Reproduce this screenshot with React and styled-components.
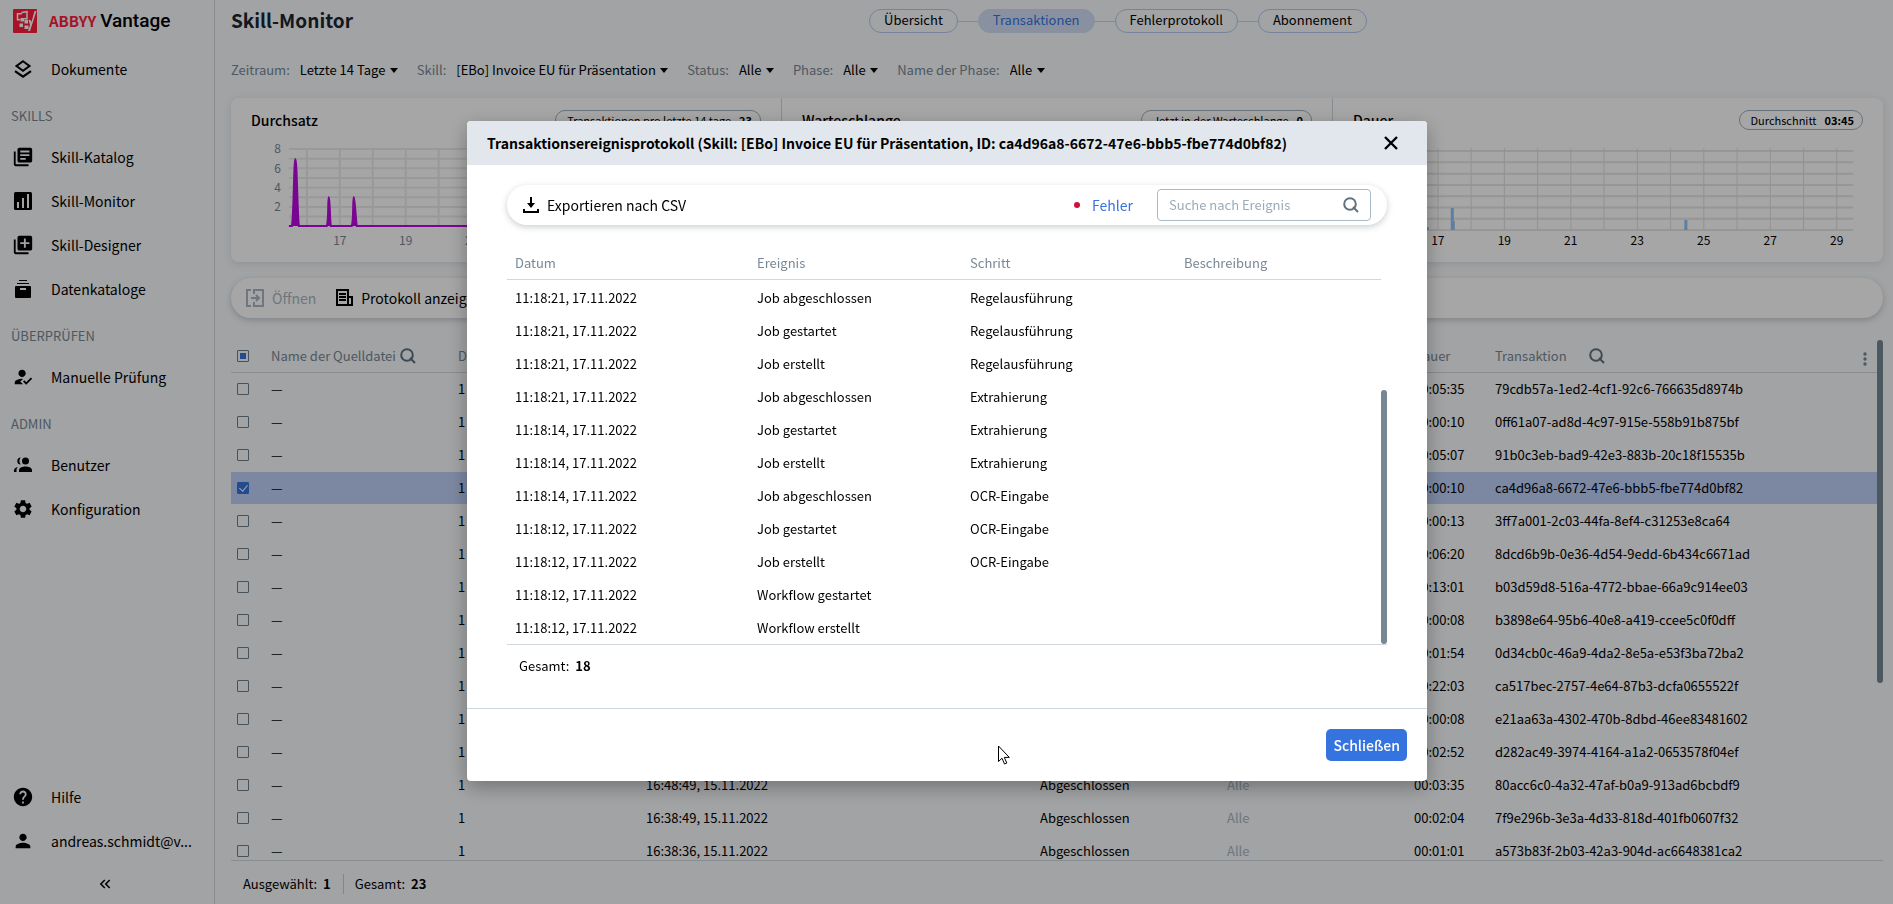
import React from "react";
import styled, { createGlobalStyle, css } from "styled-components";
import {
  MdLibraryBooks,
  MdAddToPhotos,
  MdHowToReg,
  MdSettings,
  MdHelp,
  MdPerson,
  MdKeyboardDoubleArrowLeft,
} from "react-icons/md";

const c = {
  page: "#f8fafc",
  line: "#d0d8de",
  muted: "#788896",
  disabled: "#a9b7c3",
  blue: "#3573de",
  selected: "#bfd1f8",
  thumb: "#758894",
  ink: "#000000",
};

const GlobalStyle = createGlobalStyle`
  * { box-sizing: border-box; }
  body {
    margin: 0;
    background: ${c.page};
    color: ${c.ink};
    font-family: "Noto Sans CJK SC", "Open Sans", sans-serif;
    font-size: 13px;
    line-height: 20px;
  }
  button, input, select { font: inherit; color: inherit; }
  a { color: inherit; text-decoration: none; }
  svg { display: block; flex: none; }
`;

const Shell = styled.div`
  display: flex;
  height: 100vh;
  overflow: hidden;
`;

/* ---------- sidebar ---------- */

const Sidebar = styled.aside`
  flex: 0 0 215px;
  min-width: 0;
  display: flex;
  flex-direction: column;
  border-right: 1px solid ${c.line};
`;

const Brand = styled.a`
  display: flex;
  align-items: center;
  height: 47px;
  padding: 0 0 5px 13px;
`;

const BrandName = styled.span`
  margin-left: 12px;
  color: #ff1e3c;
  font-size: 15px;
  font-weight: 700;
`;

const BrandProduct = styled.span`
  margin-left: 4px;
  font-family: Roboto, sans-serif;
  font-size: 19px;
  font-weight: 500;
`;

const Nav = styled.nav`
  display: flex;
  flex-direction: column;
  ${(p) => p.$bottom && "margin-top: auto;"}
`;

const NavItem = styled.a`
  display: flex;
  align-items: center;
  height: 44px;
  padding: 0 12px 0 11px;
  font-size: 14px;
`;

const NavIcon = styled.span`
  flex: none;
  display: grid;
  place-items: center;
  width: 24px;
  margin-right: 16px;
`;

const NavLabel = styled.span`
  white-space: nowrap;
`;

const NavHeading = styled.h2`
  margin: 0;
  padding: 0 11px;
  font-size: 13px;
  font-weight: 400;
  line-height: 50px;
  height: 44px;
  color: ${c.muted};
`;

const Collapse = styled.button`
  display: grid;
  place-items: center;
  height: 41px;
  padding: 0 4px 0 0;
  border: 0;
  background: none;
`;

/* ---------- page header ---------- */

const Main = styled.main`
  flex: 1;
  min-width: 0;
  display: flex;
  flex-direction: column;
  padding: 0 10px 0 16px;
`;

const Header = styled.header`
  display: flex;
  align-items: center;
  height: 42px;
`;

const Title = styled.h1`
  margin: 0;
  padding-bottom: 2px;
  font-size: 19px;
  font-weight: 700;
  color: #1c2530;
`;

const Tabs = styled.nav`
  display: flex;
  align-items: center;
  margin: 0 auto;
`;

const TabLink = styled.span`
  width: 20px;
  height: 1px;
  background: #c5d4f0;
`;

const Tab = styled.a`
  height: 24px;
  padding: 0 14px;
  border: 1px solid ${(p) => (p.$active ? "#d3dff8" : "#b5c9ee")};
  border-radius: 12px;
  background: ${(p) => (p.$active ? "#d3dff8" : "transparent")};
  color: ${(p) => (p.$active ? c.blue : c.ink)};
  line-height: 20px;
`;

const Filters = styled.div`
  display: flex;
  align-items: center;
  gap: 19px;
  height: 56px;
`;

const Filter = styled.label`
  display: flex;
  align-items: center;
  white-space: nowrap;
  color: ${c.muted};
`;

const Select = styled.select`
  appearance: none;
  margin: 0 4px 0 10px;
  padding: 0;
  border: 0;
  background: none;
  color: ${c.ink};
`;

/* ---------- charts ---------- */

const Cards = styled.section`
  flex: none;
  display: flex;
  height: 164px;
  border-radius: 8px;
  background: #fff;
  box-shadow: 0 2px 8px rgba(60, 90, 110, 0.15);
`;

const Panel = styled.article`
  flex: 1 1 0;
  min-width: 0;
  & + & { border-left: 1px solid ${c.line}; }
`;

const PanelHead = styled.div`
  display: flex;
  align-items: center;
  justify-content: space-between;
  height: 44px;
  padding: 0 20px;
`;

const PanelTitle = styled.h2`
  margin: 0;
  font-size: 14px;
  font-weight: 500;
`;

const Badge = styled.span`
  display: flex;
  gap: 8px;
  height: 20px;
  padding: 0 8px 0 11px;
  border: 1px solid #9fb0bd;
  border-radius: 10px;
  font-size: 11px;
  line-height: 19px;
`;

const Plot = styled.svg`
  width: 100%;
  height: 120px;
  font-size: 12px;
`;

/* ---------- toolbars ---------- */

const Toolbar = styled.div`
  flex: none;
  display: flex;
  align-items: center;
  height: 40px;
  border-radius: 20px;
  background: #fff;
  box-shadow: 0 2px 6px rgba(40, 60, 80, 0.25);
  ${(p) =>
    p.$page
      ? css`margin: 16px 0 22px; padding: 0 15px; gap: 20px;`
      : css`padding: 0 16px;`}
`;

const ToolButton = styled.button`
  display: flex;
  align-items: center;
  gap: 8px;
  padding: 0;
  border: 0;
  background: none;
  font-size: 14px;
  color: ${c.ink};
  white-space: nowrap;
  &:disabled { color: ${c.disabled}; }
`;

/* ---------- tables ---------- */

const Scroller = styled.div`
  flex: 1;
  min-height: 0;
  display: flex;
  overflow: hidden;
  border-bottom: 1px solid ${c.line};
`;

const TableBox = styled.div`
  flex: 1;
  min-width: 0;
  overflow: hidden;
`;

const Track = styled.div`
  flex: none;
  display: flex;
  flex-direction: column;
  justify-content: ${(p) => (p.$atEnd ? "flex-end" : "flex-start")};
  width: 6px;
`;

const Thumb = styled.div`
  height: ${(p) => p.$size}%;
  border-radius: 3px;
  background: ${c.thumb};
`;

const Table = styled.table`
  width: 100%;
  table-layout: fixed;
  border-collapse: separate;
  border-spacing: 0;
`;

const Th = styled.th`
  height: ${(p) => (p.$tall ? 39 : 33)}px;
  padding: ${(p) => (p.$tall ? "6px 8px 0" : "0 8px")};
  border-bottom: 1px solid ${c.line};
  color: ${c.muted};
  font-weight: 400;
  text-align: left;
  white-space: nowrap;
`;

const ThInner = styled.div`
  display: flex;
  align-items: center;
  gap: ${(p) => p.$gap || 0}px;
`;

const MenuButton = styled.button`
  margin-left: auto;
  padding: 6px 2px 0;
  border: 0;
  background: none;
  color: ${c.muted};
`;

const Td = styled.td`
  height: 33px;
  padding: 0 8px;
  border-bottom: 1px solid transparent;
  background-clip: padding-box;
  white-space: nowrap;
  ${(p) => p.$muted && `color: ${c.disabled};`}
`;

const Tr = styled.tr`
  ${(p) => p.$selected && css`${Td} { background-color: ${c.selected}; }`}
`;

const CheckBox = styled.input.attrs({ type: "checkbox" })`
  appearance: none;
  display: block;
  position: relative;
  width: 12px;
  height: 12px;
  margin: 0 0 0 -2px;
  border: 1px solid #6b7e8d;
  border-radius: 1px;

  &:checked { border-color: ${c.blue}; background: ${c.blue}; }
  &:checked::after {
    content: "";
    position: absolute;
    left: 3px;
    top: 0;
    width: 4px;
    height: 7px;
    border: solid #fff;
    border-width: 0 1px 1px 0;
    transform: rotate(40deg);
  }
  &:indeterminate::after {
    content: "";
    position: absolute;
    inset: 2px;
    background: ${c.blue};
  }
`;

const StatusBar = styled.footer`
  flex: none;
  display: flex;
  align-items: center;
  height: 43px;
  padding: 3px 12px 0;
`;

const Count = styled.span`
  display: flex;
  gap: 6px;
  & + & {
    margin-left: 12px;
    padding-left: 11px;
    border-left: 1px solid #c5cfd6;
  }
`;

/* ---------- dialog ---------- */

const Backdrop = styled.div`
  position: fixed;
  inset: 0;
  display: flex;
  align-items: center;
  justify-content: center;
  padding: 0 0 2px 1px;
  background: rgba(0, 0, 0, 0.35);
`;

const Dialog = styled.section`
  display: flex;
  flex-direction: column;
  width: 960px;
  max-width: 100%;
  border-radius: 4px;
  overflow: hidden;
  background: #fff;
  box-shadow: 0 6px 20px rgba(0, 0, 0, 0.3);
`;

const DialogHead = styled.header`
  display: flex;
  align-items: center;
  justify-content: space-between;
  height: 44px;
  padding: 0 28px 0 20px;
  background: #e1e7ec;
`;

const DialogTitle = styled.h2`
  margin: 0;
  font-size: 14px;
  font-weight: 700;
`;

const IconButton = styled.button`
  padding: 0;
  border: 0;
  background: none;
`;

const DialogBody = styled.div`
  display: flex;
  flex-direction: column;
  padding: 20px 40px 0;
`;

const ErrorToggle = styled(ToolButton)`
  margin: 0 24px 0 auto;
  gap: 12px;
  color: ${c.blue};
  &::before {
    content: "";
    width: 6px;
    height: 6px;
    border-radius: 3px;
    background: #d0103a;
  }
`;

const Search = styled.label`
  display: flex;
  align-items: center;
  width: 214px;
  height: 32px;
  padding: 0 11px;
  border: 1px solid #a9bac8;
  border-radius: 4px;
`;

const SearchInput = styled.input`
  flex: 1;
  min-width: 0;
  padding: 0;
  border: 0;
  outline: 0;
  background: none;
  &::placeholder { color: #9aabb9; opacity: 1; }
`;

const EventScroller = styled(Scroller)`
  flex: none;
  margin-top: 16px;
`;

const EventRows = styled.tbody`
  &::before {
    content: "";
    display: block;
    height: 2px;
  }
  tr:last-child td {
    height: 32px;
    border-bottom: 0;
  }
`;

const Total = styled.div`
  padding: 11px 12px 32px;
`;

const DialogFoot = styled.footer`
  display: flex;
  justify-content: flex-end;
  padding: 20px;
  border-top: 1px solid #cdd7de;
`;

const Primary = styled.button`
  height: 32px;
  padding: 0 7px;
  border: 0;
  border-radius: 5px;
  background: ${c.blue};
  color: #fff;
  font-size: 14px;
  font-weight: 500;
`;

const Pointer = styled.svg`
  position: absolute;
  left: 998px;
  top: 745px;
`;

/* ---------- drawings ---------- */

const Logo = () => (
  <svg width="24" height="24" viewBox="0 0 24 24">
    <path fill="#ff1e3c" d="M1 0h22a1 1 0 0 1 1 1v22a1 1 0 0 1-1 1H1a1 1 0 0 1-1-1V1a1 1 0 0 1 1-1z" />
    <path fill="none" stroke="#fff" strokeWidth="1.500" d="M7 10.800H4.500V4.800h4.500M8.500 3.500l5.500-.800v7h-3" />
    <g fill="#fff">
      <path d="M7.500 9h3.500v3.500H7.500zM11.500 11h3.500v3.500h-3.500zM6.500 14.500h3.500V18H6.500zM11.500 16.500h4V20h-4z" />
      <path d="M21.500 2h2L17 22h-2l2-6-1.500-5h2l1 2z" />
    </g>
  </svg>
);

const LayersIcon = () => (
  <svg width="18" height="18" viewBox="0 0 18 18" fill="none" stroke="currentColor" strokeWidth="2">
    <path d="M9 1.300 15.500 6 9 10.700 2.500 6z" />
    <path d="M1 11.200 9 16.600 17 11.200" strokeWidth="2.200" />
  </svg>
);

const MonitorIcon = () => (
  <svg width="18" height="18" viewBox="0 0 18 18">
    <rect width="18" height="18" rx="1.500" fill="currentColor" />
    <path d="M3 10h2v6H3zM8 6h2v10H8zM13 2h2v14h-2z" fill={c.page} />
  </svg>
);

const UsersIcon = () => (
  <svg width="18" height="18" viewBox="0 0 18 18" fill="currentColor">
    <circle cx="11.500" cy="5" r="3.500" />
    <path d="M6.800 1.500a3.500 3.500 0 0 0 0 7 5.500 5.500 0 0 1 0-7z" />
    <path d="M5 16v-1.800C5 11.500 9 10.500 11.500 10.500s6.500 1 6.500 3.700V16zM0 16v-1.500c0-1.600 1.500-2.700 3.800-3.400-.9.900-1.300 1.900-1.300 3V16z" />
  </svg>
);

const ArchiveIcon = () => (
  <svg width="18" height="18" viewBox="0 0 18 18" fill="currentColor">
    <path d="M5 0h8v1H5zM3 3h12v1H3zM2 6h14a1 1 0 0 1 1 1v10a1 1 0 0 1-1 1H2a1 1 0 0 1-1-1V7a1 1 0 0 1 1-1zM6 8v2h6V8z" fillRule="evenodd" />
  </svg>
);

const SearchIcon = () => (
  <svg width="16" height="16" viewBox="0 0 16 16" fill="none" stroke="#5f7280" strokeWidth="2">
    <circle cx="7" cy="7" r="5.800" />
    <path d="M10 10l5 5" />
  </svg>
);

const OpenIcon = () => (
  <svg width="18" height="18" viewBox="0 0 18 18" fill="none" stroke="currentColor" strokeWidth="2">
    <path d="M5 1H1v16h4M8 5V1h9v16H8v-4" />
    <path d="M5 9h8M10 6l3 3-3 3" />
  </svg>
);

const LogIcon = () => (
  <svg width="17" height="18" viewBox="0 0 17 18" fill="none" stroke="currentColor" strokeWidth="2">
    <path d="M1 1h11v15H1zM12 8h4v8h-5M3 5h7M3 8h7M3 11h7" />
  </svg>
);

const DownloadIcon = () => (
  <svg width="16" height="16" viewBox="0 0 16 16">
    <path d="M1 12v3h14v-3" fill="none" stroke="currentColor" strokeWidth="2" />
    <path d="M7 0h2v6h3l-4 5-4-5h3z" fill="currentColor" />
  </svg>
);

const Caret = () => (
  <svg width="8" height="5" viewBox="0 0 8 5">
    <path d="M0 0h8L4 5z" fill="#000" />
  </svg>
);

const DotsIcon = () => (
  <svg width="4" height="14" viewBox="0 0 4 14" fill="currentColor">
    <circle cx="2" cy="2" r="1.700" />
    <circle cx="2" cy="7" r="1.700" />
    <circle cx="2" cy="12" r="1.700" />
  </svg>
);

const CloseIcon = () => (
  <svg width="16" height="16" viewBox="0 0 16 16">
    <path d="M2 2l12 12M14 2L2 14" stroke="#000" strokeWidth="2.400" />
  </svg>
);

const range = (n) => Array.from({ length: n }, (_, i) => i);

const ThroughputPlot = () => (
  <Plot viewBox="0 0 551 120" role="img" aria-label="Durchsatz">
    <g stroke="#ebebeb" strokeWidth="2">
      {range(8).map((i) => <path key={i} d={`M58 ${7 + i * 9.65}H530`} />)}
      {range(14).map((i) => <path key={i} d={`M${76 + i * 33} 6V84`} />)}
    </g>
    <path d="M58 84h3c2-10 2-67 3.500-67s2 57 3.500 67h28c2-6 1-29 2-29s1 23 2 29h21c2-6 1-29 2-29s2 23 3 29H530" fill="#bb08e0" stroke="#bb08e0" strokeWidth="2" />
    <g fill={c.muted} textAnchor="end">
      {[8, 6, 4, 2].map((n, i) => <text key={n} x="50" y={11 + i * 19.5}>{n}</text>)}
    </g>
    <g fill={c.muted} textAnchor="middle">
      {[17, 19, 21].map((n, i) => <text key={n} x={109 + i * 66} y="103">{n}</text>)}
    </g>
  </Plot>
);

const DurationPlot = ({ bars }) => (
  <Plot viewBox="0 0 551 120" role="img">
    <g stroke="#e6e6e6" strokeWidth="2">
      {range(8).map((i) => <path key={i} d={`M38 ${9 + i * 11.3}H521`} />)}
    </g>
    <g stroke="#e0e0e0">
      {range(15).map((i) => <path key={i} d={`M${38.5 + i * 33.3} 6V88`} />)}
    </g>
    {bars && (
      <>
        <path d="M93 85h3v3h-3zM118 66h3v13h1v9h-4zM352 78h3v10h-3z" fill="#91c3fa" />
        <g textAnchor="middle">
          {[17, 19, 21, 23, 25, 27, 29].map((n, i) => (
            <text key={n} x={105 + i * 66.6} y="103">{n}</text>
          ))}
        </g>
      </>
    )}
  </Plot>
);

/* ---------- data ---------- */

const filters = [
  ["Zeitraum:", "Letzte 14 Tage"],
  ["Skill:", "[EBo] Invoice EU für Präsentation"],
  ["Status:", "Alle"],
  ["Phase:", "Alle"],
  ["Name der Phase:", "Alle"],
];

const tabs = ["Übersicht", "Transaktionen", "Fehlerprotokoll", "Abonnement"];

const transactions = [
  ["", "00:05:35", "79cdb57a-1ed2-4cf1-92c6-766635d8974b"],
  ["", "00:00:10", "0ff61a07-ad8d-4c97-915e-558b91b875bf"],
  ["", "00:05:07", "91b0c3eb-bad9-42e3-883b-20c18f15535b"],
  ["", "00:00:10", "ca4d96a8-6672-47e6-bbb5-fbe774d0bf82"],
  ["", "00:00:13", "3ff7a001-2c03-44fa-8ef4-c31253e8ca64"],
  ["", "00:06:20", "8dcd6b9b-0e36-4d54-9edd-6b434c6671ad"],
  ["", "00:13:01", "b03d59d8-516a-4772-bbae-66a9c914ee03"],
  ["", "00:00:08", "b3898e64-95b6-40e8-a419-ccee5c0f0dff"],
  ["", "00:01:54", "0d34cb0c-46a9-4da2-8e5a-e53f3ba72ba2"],
  ["", "00:22:03", "ca517bec-2757-4e64-87b3-dcfa0655522f"],
  ["", "00:00:08", "e21aa63a-4302-470b-8dbd-46ee83481602"],
  ["", "00:02:52", "d282ac49-3974-4164-a1a2-0653578f04ef"],
  ["16:48:49, 15.11.2022", "00:03:35", "80acc6c0-4a32-47af-b0a9-913ad6bcbdf9"],
  ["16:38:49, 15.11.2022", "00:02:04", "7f9e296b-3e3a-4d33-818d-401fb0607f32"],
  ["16:38:36, 15.11.2022", "00:01:01", "a573b83f-2b03-42a3-904d-ac6648381ca2"],
];

const events = [
  ["11:18:21, 17.11.2022", "Job abgeschlossen", "Regelausführung"],
  ["11:18:21, 17.11.2022", "Job gestartet", "Regelausführung"],
  ["11:18:21, 17.11.2022", "Job erstellt", "Regelausführung"],
  ["11:18:21, 17.11.2022", "Job abgeschlossen", "Extrahierung"],
  ["11:18:14, 17.11.2022", "Job gestartet", "Extrahierung"],
  ["11:18:14, 17.11.2022", "Job erstellt", "Extrahierung"],
  ["11:18:14, 17.11.2022", "Job abgeschlossen", "OCR-Eingabe"],
  ["11:18:12, 17.11.2022", "Job gestartet", "OCR-Eingabe"],
  ["11:18:12, 17.11.2022", "Job erstellt", "OCR-Eingabe"],
  ["11:18:12, 17.11.2022", "Workflow gestartet", ""],
  ["11:18:12, 17.11.2022", "Workflow erstellt", ""],
];

const Item = ({ icon, children }) => (
  <NavItem href="#">
    <NavIcon>{icon}</NavIcon>
    <NavLabel>{children}</NavLabel>
  </NavItem>
);

const SideMenu = () => (
  <Sidebar>
    <Brand href="#">
      <Logo />
      <BrandName>ABBYY</BrandName>
      <BrandProduct>Vantage</BrandProduct>
    </Brand>
    <Nav>
      <Item icon={<LayersIcon />}>Dokumente</Item>
      <NavHeading>SKILLS</NavHeading>
      <Item icon={<MdLibraryBooks size={22} />}>Skill-Katalog</Item>
      <Item icon={<MonitorIcon />}>Skill-Monitor</Item>
      <Item icon={<MdAddToPhotos size={22} />}>Skill-Designer</Item>
      <Item icon={<ArchiveIcon />}>Datenkataloge</Item>
      <NavHeading>ÜBERPRÜFEN</NavHeading>
      <Item icon={<MdHowToReg size={22} />}>Manuelle Prüfung</Item>
      <NavHeading>ADMIN</NavHeading>
      <Item icon={<UsersIcon />}>Benutzer</Item>
      <Item icon={<MdSettings size={22} />}>Konfiguration</Item>
    </Nav>
    <Nav $bottom>
      <Item icon={<MdHelp size={22} />}>Hilfe</Item>
      <Item icon={<MdPerson size={22} />}>andreas.schmidt@v...</Item>
      <Collapse aria-label="Menü einklappen">
        <MdKeyboardDoubleArrowLeft size={18} />
      </Collapse>
    </Nav>
  </Sidebar>
);

const Transactions = () => (
  <Scroller>
    <TableBox>
      <Table>
        <colgroup>
          {[32, 187, 188, 394, 187, 187, 81].map((w, i) => <col key={i} width={w} />)}
          <col />
        </colgroup>
        <thead>
          <tr>
            <Th>
              <CheckBox
                aria-label="Alle auswählen"
                ref={(el) => { if (el) el.indeterminate = true; }}
              />
            </Th>
            <Th><ThInner $gap={4}>Name der Quelldatei <SearchIcon /></ThInner></Th>
            <Th>Dokumente</Th>
            <Th />
            <Th />
            <Th />
            <Th>Dauer</Th>
            <Th>
              <ThInner $gap={22}>
                Transaktion <SearchIcon />
                <MenuButton aria-label="Spalten"><DotsIcon /></MenuButton>
              </ThInner>
            </Th>
          </tr>
        </thead>
        <tbody>
          {transactions.map(([date, duration, id], i) => (
            <Tr key={id} $selected={i === 3}>
              <Td><CheckBox aria-label={id} defaultChecked={i === 3} /></Td>
              <Td>—</Td>
              <Td>1</Td>
              <Td>{date}</Td>
              <Td>{date && "Abgeschlossen"}</Td>
              <Td $muted>{date && "Alle"}</Td>
              <Td>{duration}</Td>
              <Td>{id}</Td>
            </Tr>
          ))}
        </tbody>
      </Table>
    </TableBox>
    <Track><Thumb $size={66} /></Track>
  </Scroller>
);

const EventDialog = () => (
  <Backdrop>
    <Dialog role="dialog" aria-labelledby="event-title">
      <DialogHead>
        <DialogTitle id="event-title">
          Transaktionsereignisprotokoll (Skill: [EBo] Invoice EU für Präsentation, ID: ca4d96a8-6672-47e6-bbb5-fbe774d0bf82)
        </DialogTitle>
        <IconButton aria-label="Schließen"><CloseIcon /></IconButton>
      </DialogHead>
      <DialogBody>
        <Toolbar>
          <ToolButton><DownloadIcon />Exportieren nach CSV</ToolButton>
          <ErrorToggle>Fehler</ErrorToggle>
          <Search>
            <SearchInput aria-label="Suche nach Ereignis" placeholder="Suche nach Ereignis" />
            <SearchIcon />
          </Search>
        </Toolbar>
        <EventScroller>
          <TableBox>
            <Table>
              <colgroup>
                {[242, 213, 214].map((w, i) => <col key={i} width={w} />)}
                <col />
              </colgroup>
              <thead>
                <tr>
                  <Th $tall>Datum</Th>
                  <Th $tall>Ereignis</Th>
                  <Th $tall>Schritt</Th>
                  <Th $tall>Beschreibung</Th>
                </tr>
              </thead>
              <EventRows>
                {events.map(([date, name, step], i) => (
                  <Tr key={i}>
                    <Td>{date}</Td>
                    <Td>{name}</Td>
                    <Td>{step}</Td>
                    <Td />
                  </Tr>
                ))}
              </EventRows>
            </Table>
          </TableBox>
          <Track $atEnd><Thumb $size={63} /></Track>
        </EventScroller>
        <Total><Count>Gesamt: <b>18</b></Count></Total>
      </DialogBody>
      <DialogFoot>
        <Primary>Schließen</Primary>
      </DialogFoot>
    </Dialog>
  </Backdrop>
);

export default function App() {
  return (
    <>
      <GlobalStyle />
      <Shell>
        <SideMenu />
        <Main>
          <Header>
            <Title>Skill-Monitor</Title>
            <Tabs>
              {tabs.map((name, i) => (
                <React.Fragment key={name}>
                  {i > 0 && <TabLink />}
                  <Tab href="#" $active={i === 1}>{name}</Tab>
                </React.Fragment>
              ))}
            </Tabs>
          </Header>
          <Filters>
            {filters.map(([label, value]) => (
              <Filter key={label}>
                {label}
                <Select><option>{value}</option></Select>
                <Caret />
              </Filter>
            ))}
          </Filters>
          <Cards>
            <Panel>
              <PanelHead>
                <PanelTitle>Durchsatz</PanelTitle>
                <Badge>Transaktionen pro letzte 14 tage <b>23</b></Badge>
              </PanelHead>
              <ThroughputPlot />
            </Panel>
            <Panel>
              <PanelHead>
                <PanelTitle>Warteschlange</PanelTitle>
                <Badge>Jetzt in der Warteschlange <b>0</b></Badge>
              </PanelHead>
              <DurationPlot />
            </Panel>
            <Panel>
              <PanelHead>
                <PanelTitle>Dauer</PanelTitle>
                <Badge>Durchschnitt <b>03:45</b></Badge>
              </PanelHead>
              <DurationPlot bars />
            </Panel>
          </Cards>
          <Toolbar $page>
            <ToolButton disabled><OpenIcon />Öffnen</ToolButton>
            <ToolButton><LogIcon />Protokoll anzeigen</ToolButton>
          </Toolbar>
          <Transactions />
          <StatusBar>
            <Count>Ausgewählt: <b>1</b></Count>
            <Count>Gesamt: <b>23</b></Count>
          </StatusBar>
        </Main>
      </Shell>
      <EventDialog />
      <Pointer width="13" height="20" viewBox="0 0 13 20">
        <path d="M.500 1v15.500l3.500-3.300 2.500 5.800 2.300-1-2.500-5.600h5z" fill="#fff" stroke="#000" />
      </Pointer>
    </>
  );
}
